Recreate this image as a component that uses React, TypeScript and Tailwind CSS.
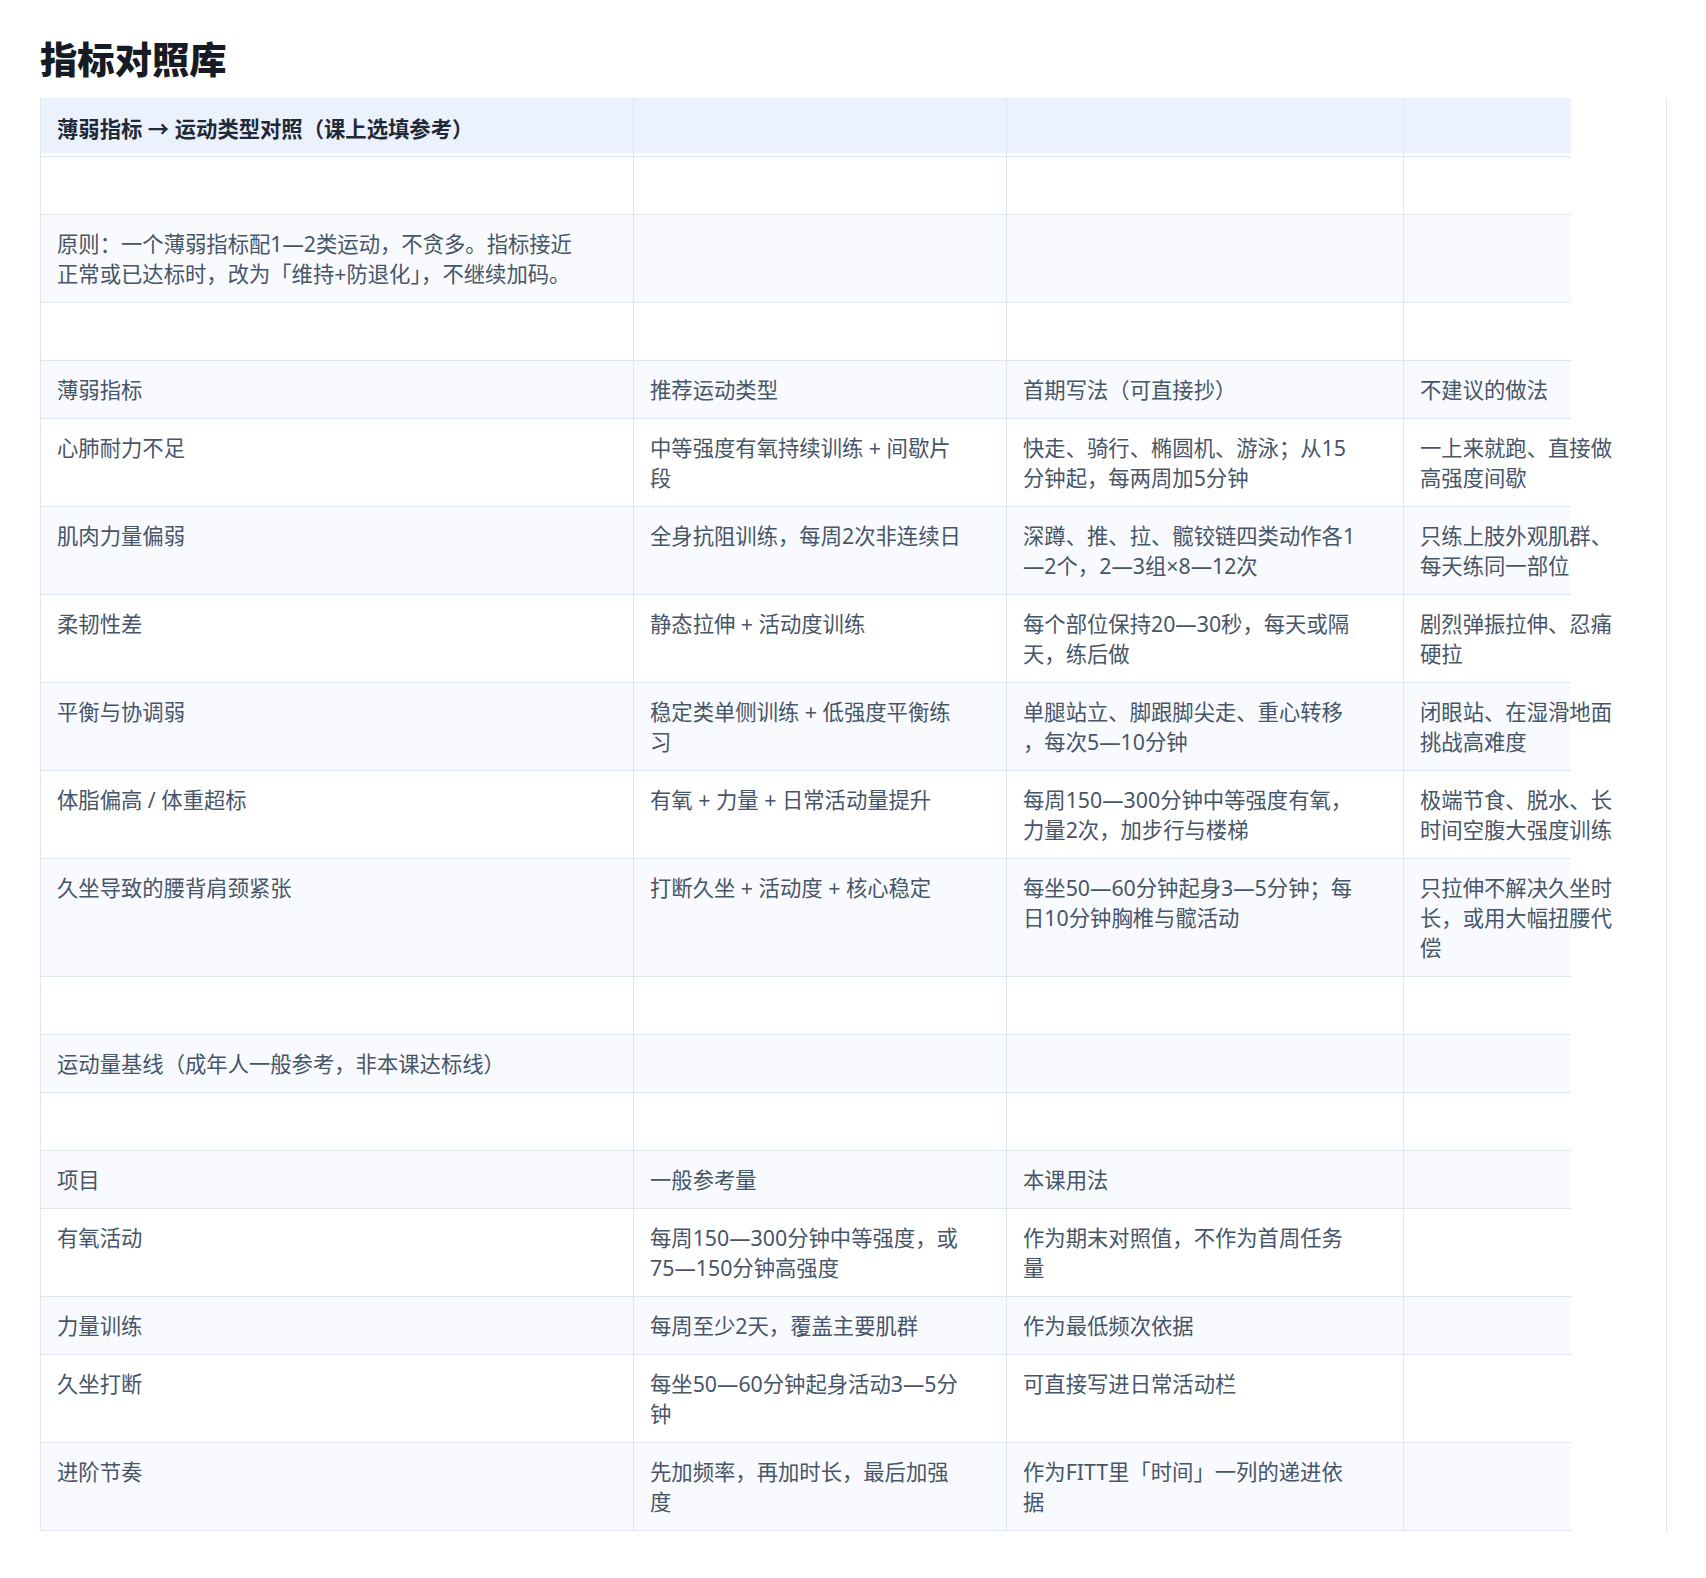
type Cell = string[]

interface Row {
  cells: Cell[]
}

const rows: Row[] = [
  { cells: [[], [], [], []] },
  {
    cells: [
      ["原则：一个薄弱指标配1—2类运动，不贪多。指标接近", "正常或已达标时，改为「维持+防退化」，不继续加码。"],
      [],
      [],
      [],
    ],
  },
  { cells: [[], [], [], []] },
  { cells: [["薄弱指标"], ["推荐运动类型"], ["首期写法（可直接抄）"], ["不建议的做法"]] },
  {
    cells: [
      ["心肺耐力不足"],
      ["中等强度有氧持续训练 + 间歇片", "段"],
      ["快走、骑行、椭圆机、游泳；从15", "分钟起，每两周加5分钟"],
      ["一上来就跑、直接做", "高强度间歇"],
    ],
  },
  {
    cells: [
      ["肌肉力量偏弱"],
      ["全身抗阻训练，每周2次非连续日"],
      ["深蹲、推、拉、髋铰链四类动作各1", "—2个，2—3组×8—12次"],
      ["只练上肢外观肌群、", "每天练同一部位"],
    ],
  },
  {
    cells: [
      ["柔韧性差"],
      ["静态拉伸 + 活动度训练"],
      ["每个部位保持20—30秒，每天或隔", "天，练后做"],
      ["剧烈弹振拉伸、忍痛", "硬拉"],
    ],
  },
  {
    cells: [
      ["平衡与协调弱"],
      ["稳定类单侧训练 + 低强度平衡练", "习"],
      ["单腿站立、脚跟脚尖走、重心转移", "，每次5—10分钟"],
      ["闭眼站、在湿滑地面", "挑战高难度"],
    ],
  },
  {
    cells: [
      ["体脂偏高 / 体重超标"],
      ["有氧 + 力量 + 日常活动量提升"],
      ["每周150—300分钟中等强度有氧，", "力量2次，加步行与楼梯"],
      ["极端节食、脱水、长", "时间空腹大强度训练"],
    ],
  },
  {
    cells: [
      ["久坐导致的腰背肩颈紧张"],
      ["打断久坐 + 活动度 + 核心稳定"],
      ["每坐50—60分钟起身3—5分钟；每", "日10分钟胸椎与髋活动"],
      ["只拉伸不解决久坐时", "长，或用大幅扭腰代", "偿"],
    ],
  },
  { cells: [[], [], [], []] },
  { cells: [["运动量基线（成年人一般参考，非本课达标线）"], [], [], []] },
  { cells: [[], [], [], []] },
  { cells: [["项目"], ["一般参考量"], ["本课用法"], []] },
  {
    cells: [
      ["有氧活动"],
      ["每周150—300分钟中等强度，或", "75—150分钟高强度"],
      ["作为期末对照值，不作为首周任务", "量"],
      [],
    ],
  },
  { cells: [["力量训练"], ["每周至少2天，覆盖主要肌群"], ["作为最低频次依据"], []] },
  {
    cells: [
      ["久坐打断"],
      ["每坐50—60分钟起身活动3—5分", "钟"],
      ["可直接写进日常活动栏"],
      [],
    ],
  },
  {
    cells: [
      ["进阶节奏"],
      ["先加频率，再加时长，最后加强", "度"],
      ["作为FITT里「时间」一列的递进依", "据"],
      [],
    ],
  },
]

const TableCell = ({ lines, last }: { lines: Cell; last?: boolean }) => {
  return (
    <div
      className={
        last
          ? "min-h-[30px] px-4 pt-[14px] pb-[13px]"
          : "min-h-[30px] border-r border-[#dfe6f0] px-4 pt-[14px] pb-[13px]"
      }>
      {lines.map((line, i) => (
        <div key={i} className="leading-[30px] whitespace-nowrap">
          {line}
        </div>
      ))}
      {lines.length === 0 && <div className="h-[30px]" />}
    </div>
  )
}

const App = () => {
  return (
    <div className="min-h-[1578px] bg-white px-10 font-['Noto_Sans','Noto_Sans_CJK_SC',sans-serif]">
      <h1 className="pt-[37px] pb-[16px] text-[37.33px] leading-[45px] font-extrabold text-[#161b24]">
        指标对照库
      </h1>

      <div className="w-[1627px] border-r border-[#dfe6f0]">
        <div className="w-[1531px] border-l border-[#dfe6f0] text-[21.33px] text-[#475569]">
          {/* caption row */}
          <div className="grid grid-cols-[593px_373px_397px_167px] border-b border-[#dfe6f0]">
            <div className="border-r border-[#dfe6f0] pb-[3px]">
              <div className="h-[55px] bg-[#ebf2fe] px-4 pt-[16px] leading-[30px] font-bold whitespace-nowrap text-[#1f2937]">
                薄弱指标 → 运动类型对照（课上选填参考）
              </div>
            </div>
            <div className="border-r border-[#dfe6f0] pb-[3px]">
              <div className="h-[55px] bg-[#ebf2fe]" />
            </div>
            <div className="border-r border-[#dfe6f0] pb-[3px]">
              <div className="h-[55px] bg-[#ebf2fe]" />
            </div>
            <div className="pb-[3px]">
              <div className="h-[55px] bg-[#ebf2fe]" />
            </div>
          </div>

          {rows.map((row, i) => (
            <div
              key={i}
              className={
                i % 2 === 1
                  ? "grid grid-cols-[593px_373px_397px_167px] border-b border-[#dfe6f0] bg-[#f8fafd]"
                  : "grid grid-cols-[593px_373px_397px_167px] border-b border-[#dfe6f0] bg-white"
              }>
              {row.cells.map((lines, j) => (
                <TableCell key={j} lines={lines} last={j === 3} />
              ))}
            </div>
          ))}
        </div>
      </div>
    </div>
  )
}

export default App
